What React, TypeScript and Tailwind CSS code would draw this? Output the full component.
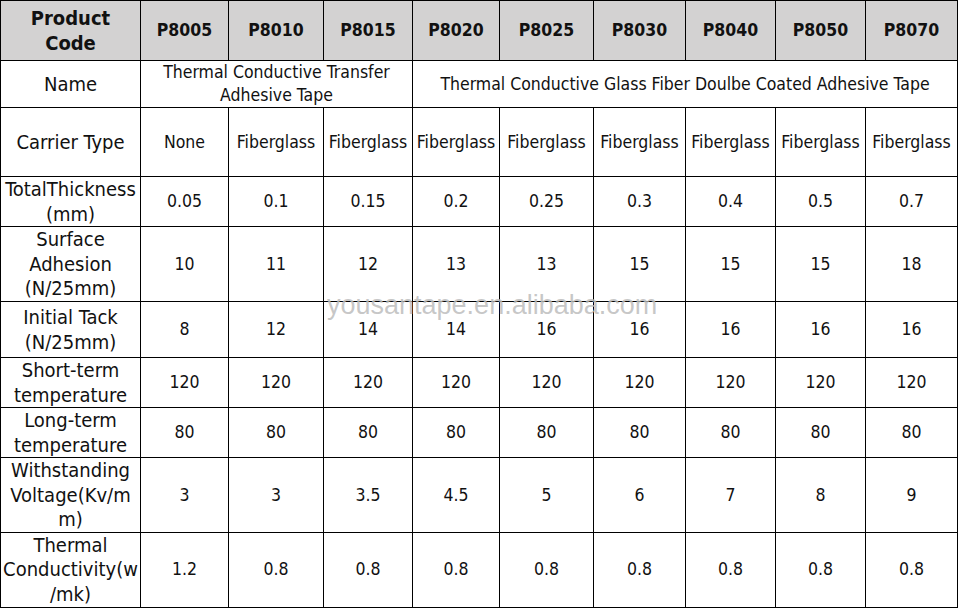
const codes = ['P8005', 'P8010', 'P8015', 'P8020', 'P8025', 'P8030', 'P8040', 'P8050', 'P8070']
const colWidths = [140, 88, 95, 89, 87, 94, 92, 90, 90, 92]

type Row = { label: string[]; values: string[]; h: string }

const rows: Row[] = [
  { label: ['Carrier Type'], values: ['None', 'Fiberglass', 'Fiberglass', 'Fiberglass', 'Fiberglass', 'Fiberglass', 'Fiberglass', 'Fiberglass', 'Fiberglass'], h: 'h-[69px]' },
  { label: ['TotalThickness', '(mm)'], values: ['0.05', '0.1', '0.15', '0.2', '0.25', '0.3', '0.4', '0.5', '0.7'], h: 'h-[50px]' },
  { label: ['Surface', 'Adhesion', '(N/25mm)'], values: ['10', '11', '12', '13', '13', '15', '15', '15', '18'], h: 'h-[75px]' },
  { label: ['Initial Tack', '(N/25mm)'], values: ['8', '12', '14', '14', '16', '16', '16', '16', '16'], h: 'h-[56px]' },
  { label: ['Short-term', 'temperature'], values: ['120', '120', '120', '120', '120', '120', '120', '120', '120'], h: 'h-[49px]' },
  { label: ['Long-term', 'temperature'], values: ['80', '80', '80', '80', '80', '80', '80', '80', '80'], h: 'h-[50px]' },
  { label: ['Withstanding', 'Voltage(Kv/m', 'm)'], values: ['3', '3', '3.5', '4.5', '5', '6', '7', '8', '9'], h: 'h-[74px]' },
  { label: ['Thermal', 'Conductivity(w', '/mk)'], values: ['1.2', '0.8', '0.8', '0.8', '0.8', '0.8', '0.8', '0.8', '0.8'], h: 'h-[75px]' },
]

const cell = 'border border-black text-center align-middle p-0'

function Label({ lines }: { lines: string[] }) {
  return (
    <td className={`${cell} text-[20px] leading-[24.5px] whitespace-nowrap`}>
      {lines.map((l, i) => (
        <div key={i}>{l}</div>
      ))}
    </td>
  )
}

export default function App() {
  return (
    <div className="relative w-[960px] h-[609px] bg-white text-[#111] font-['DejaVu_Sans_Condensed','DejaVu_Sans',sans-serif] overflow-hidden">
      <table className="table-fixed border-collapse w-[957px]">
        <colgroup>
          {colWidths.map((w, i) => (
            <col key={i} style={{ width: w }} />
          ))}
        </colgroup>
        <tbody>
          {/* header */}
          <tr className="h-[60px] bg-[#d3d2d2]">
            <td className={`${cell} font-bold text-[20px] leading-[25px]`}>
              <div>Product</div>
              <div>Code</div>
            </td>
            {codes.map((c) => (
              <td key={c} className={`${cell} font-bold text-[17.5px]`}>
                {c}
              </td>
            ))}
          </tr>

          <tr className="h-[46px]">
            <Label lines={['Name']} />
            <td colSpan={3} className={`${cell} text-[17.5px] leading-[23px] whitespace-nowrap`}>
              <div>Thermal Conductive Transfer</div>
              <div>Adhesive Tape</div>
            </td>
            <td colSpan={6} className={`${cell} text-[17.5px] whitespace-nowrap`}>
              Thermal Conductive Glass Fiber Doulbe Coated Adhesive Tape
            </td>
          </tr>

          {rows.map((r) => (
            <tr key={r.label.join(' ')} className={r.h}>
              <Label lines={r.label} />
              {r.values.map((v, i) => (
                <td key={i} className={`${cell} text-[17.5px]`}>
                  {v}
                </td>
              ))}
            </tr>
          ))}
        </tbody>
      </table>

      {/* watermark */}
      <div className="absolute left-[327px] top-[289px] text-[27px] leading-[32px] text-[#bdbdbd]/85 font-['Liberation_Sans',sans-serif] pointer-events-none">
        yousantape.en.alibaba.com
      </div>
    </div>
  )
}
